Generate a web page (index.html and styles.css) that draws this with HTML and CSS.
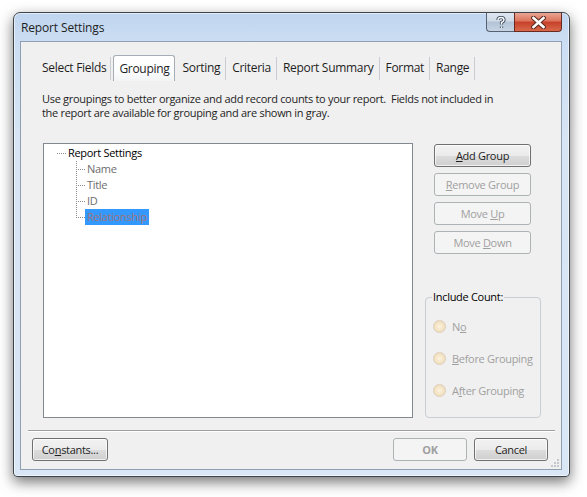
FILE: index.html
```html
<!DOCTYPE html>
<html>
<head>
<meta charset="utf-8">
<title>Report Settings</title>
<link rel="stylesheet" href="styles.css">
</head>
<body>
<div class="window">
  <div class="titlebar">
    <span class="title">Report Settings</span>
    <div class="caption-buttons">
      <div class="cap help"><svg width="10" height="13" viewBox="0 0 10 13"><path d="M2 4 Q2 1.5 5 1.5 Q8 1.5 8 4 Q8 5.5 5.5 6.5 L5.5 8.5 M5.5 10.5 L5.5 12" fill="none" stroke="#3b4a5c" stroke-width="3.2"/><path d="M2 4 Q2 1.5 5 1.5 Q8 1.5 8 4 Q8 5.5 5.5 6.5 L5.5 8.5 M5.5 10.5 L5.5 12" fill="none" stroke="#ffffff" stroke-width="1.4"/></svg></div>
      <div class="cap close"><svg width="15" height="13" viewBox="0 0 15 13"><path d="M2.5 2 L12.5 11 M12.5 2 L2.5 11" stroke="#5a2a22" stroke-width="4.6" stroke-linecap="square"/><path d="M2.5 2 L12.5 11 M12.5 2 L2.5 11" stroke="#ffffff" stroke-width="2.6" stroke-linecap="square"/></svg></div>
    </div>
  </div>
  <div class="client">
    <div class="tabs">
      <div class="tab first-tab">Select Fields</div>
      <div class="tab active">Grouping</div>
      <div class="tab">Sorting</div>
      <div class="tab">Criteria</div>
      <div class="tab">Report Summary</div>
      <div class="tab">Format</div>
      <div class="tab">Range</div>
    </div>
    <div class="desc">
      <div class="line">Use groupings to better organize and add record counts to your report.&nbsp; Fields not included in</div>
      <div class="line">the report are available for grouping and are shown in gray.</div>
    </div>
    <div class="main">
      <div class="tree">
        <div class="row root"><span class="conn conn-root"></span><span class="label">Report Settings</span></div>
        <div class="row child"><span class="conn conn-mid"></span><span class="label gray">Name</span></div>
        <div class="row child"><span class="conn conn-mid"></span><span class="label gray">Title</span></div>
        <div class="row child"><span class="conn conn-mid"></span><span class="label gray">ID</span></div>
        <div class="row child"><span class="conn conn-last"></span><span class="label selected">Relationship</span></div>
      </div>
      <div class="side">
        <div class="btn-stack">
          <button class="btn"><u>A</u>dd Group</button>
          <button class="btn disabled"><u>R</u>emove Group</button>
          <button class="btn disabled">Move <u>U</u>p</button>
          <button class="btn disabled">Move <u>D</u>own</button>
        </div>
        <fieldset class="group">
          <legend>Include Count:</legend>
          <div class="radio"><span class="dot"></span>N<u>o</u></div>
          <div class="radio"><span class="dot"></span><u>B</u>efore Grouping</div>
          <div class="radio"><span class="dot"></span>A<u>f</u>ter Grouping</div>
        </fieldset>
      </div>
    </div>
    <div class="separator"></div>
    <div class="footer">
      <button class="btn wide first">Co<u>n</u>stants...</button>
      <div class="spacer"></div>
      <button class="btn wide disabled bold">OK</button>
      <button class="btn wide">Cancel</button>
    </div>
    <svg class="grip" width="10" height="10" viewBox="0 0 10 10">
      <g fill="#c4c8cc"><rect x="7" y="1" width="2" height="2"/><rect x="4" y="4" width="2" height="2"/><rect x="7" y="4" width="2" height="2"/><rect x="1" y="7" width="2" height="2"/><rect x="4" y="7" width="2" height="2"/><rect x="7" y="7" width="2" height="2"/></g>
    </svg>
  </div>
</div>
</body>
</html>
```

FILE: styles.css
```css
* { box-sizing: border-box; }
html, body { margin: 0; padding: 0; background: #ffffff; }
body {
  width: 587px;
  height: 497px;
  overflow: hidden;
  font-family: "Open Sans", "Noto Sans", sans-serif;
  font-size: 11px;
  letter-spacing: -0.3px;
  color: #1a1a1a;
}
.window {
  margin: 12px 0 0 13px;
  width: 557px;
  height: 465px;
  border: 1px solid #3f4448;
  border-radius: 7px 7px 4px 4px;
  background: linear-gradient(#c0d5ef 0px, #cbdef3 30px, #d6e4f4 120px, #d9e6f5 100%);
  box-shadow: 0 5px 14px rgba(0,0,0,0.55), inset 0 0 0 1px rgba(255,255,255,0.55);
  display: flex;
  flex-direction: column;
}
.titlebar {
  height: 28px;
  display: flex;
  align-items: flex-start;
  padding: 0 7px 0 7px;
}
.title {
  font-size: 12px;
  color: #1e1e1e;
  margin-top: 6px;
  letter-spacing: -0.15px;
}
.caption-buttons {
  margin-left: auto;
  display: flex;
  height: 19px;
}
.cap {
  height: 19px;
  display: flex;
  align-items: center;
  justify-content: center;
  border: 1px solid #566273;
  border-top: none;
}
.help {
  width: 28px;
  border-radius: 0 0 0 4px;
  border-right: none;
  background: linear-gradient(#dfe7f0 0%, #cfdae7 45%, #b3c3d6 50%, #c6d4e4 100%);
}
.close {
  width: 48px;
  border-radius: 0 0 4px 0;
  border-color: #6b2a20;
  background: linear-gradient(#eaa594 0%, #dc735a 45%, #c6402a 50%, #d8694a 100%);
}
.client {
  position: relative;
  margin: 0 7px 0 6px;
  width: 542px;
  height: 429px;
  border: 1px solid #8e9eb3;
  background: #f0f0f0;
  display: flex;
  flex-direction: column;
}
.tabs {
  display: flex;
  margin-top: 13px;
  padding-left: 16px;
  height: 26px;
  align-items: stretch;
}
.tab {
  padding: 0 6px;
  line-height: 25px;
  font-size: 12px;
  color: #1e1e1e;
  position: relative;
  white-space: nowrap;
}
.tab.first-tab { padding: 0 5px; }
.tab::after {
  content: "";
  position: absolute;
  right: 0;
  top: 2px;
  bottom: 1px;
  border-right: 1px solid #c9cdd2;
}
.tab.active {
  margin-left: 2px;
  margin-right: 1px;
  padding: 0 5px;
  border: 1px solid #a6adb6;
  border-bottom: none;
  border-radius: 3px 3px 0 0;
  background: linear-gradient(#ffffff 0%, #fbfcfd 60%, #f3f4f6 100%);
}
.tab.active::after { display: none; }
.desc {
  margin: 10px 0 0 21px;
  color: #1e1e1e;
}
.line {
  height: 14px;
  line-height: 15px;
  white-space: nowrap;
}
.main {
  display: flex;
  margin-top: 24px;
  margin-left: 22px;
  height: 275px;
}
.tree {
  width: 370px;
  height: 275px;
  background: #ffffff;
  border: 1px solid #828790;
  padding-top: 1px;
  padding-left: 13px;
}
.row {
  display: flex;
  height: 16px;
  line-height: 16px;
}
.conn {
  width: 9px;
  height: 16px;
  flex: none;
}
.conn-root {
  background: repeating-linear-gradient(to right, #8c8c8c 0 1px, transparent 1px 2px) no-repeat 0 8px / 100% 1px;
}
.child .conn { margin-left: 19px; }
.conn-mid {
  background:
    repeating-linear-gradient(to bottom, #8c8c8c 0 1px, transparent 1px 2px) no-repeat 0 0 / 1px 100%,
    repeating-linear-gradient(to right, #8c8c8c 0 1px, transparent 1px 2px) no-repeat 0 8px / 100% 1px;
}
.conn-last {
  background:
    repeating-linear-gradient(to bottom, #8c8c8c 0 1px, transparent 1px 2px) no-repeat 0 0 / 1px 9px,
    repeating-linear-gradient(to right, #8c8c8c 0 1px, transparent 1px 2px) no-repeat 0 8px / 100% 1px;
}
.label {
  padding: 0 2px;
  white-space: nowrap;
  color: #000;
}
.label.gray { color: #6d6d6d; }
.label.selected { background: #3399ff; color: #a27479; }
.side {
  margin-left: 12px;
  width: 116px;
  display: flex;
  flex-direction: column;
}
.btn-stack {
  display: flex;
  flex-direction: column;
  gap: 6px;
  padding: 1px 0 0 9px;
}
.btn {
  font-family: inherit;
  font-size: 11px;
  letter-spacing: -0.3px;
  width: 97px;
  height: 23px;
  padding: 0;
  border: 1px solid #707070;
  border-radius: 3px;
  background: linear-gradient(#f2f2f2 0%, #ebebeb 50%, #dddddd 51%, #cfcfcf 100%);
  box-shadow: inset 0 0 0 1px rgba(255,255,255,0.7);
  color: #1e1e1e;
}
.btn.disabled {
  border-color: #adb2b5;
  background: #f4f4f4;
  box-shadow: none;
  color: #a0a0a0;
}
.btn.bold { font-weight: bold; }
.btn.wide { width: 74px; }
.btn.first { width: 76px; }
.group {
  margin: auto 0 0 0;
  height: 127px;
  border: 1px solid #c9ced3;
  border-radius: 4px;
  padding: 16px 0 0 7px;
}
.group legend {
  padding: 0 1px;
  margin-left: -1px;
  color: #000;
  font-size: 11px;
  line-height: 12px;
}
.radio {
  display: flex;
  align-items: center;
  height: 14px;
  margin-bottom: 18px;
  color: #a0a0a0;
  white-space: nowrap;
}
.dot {
  width: 13px;
  height: 13px;
  border-radius: 50%;
  border: 1px solid #dccfb8;
  background: radial-gradient(circle at 50% 50%, #fbf2df 0%, #f1dfbd 70%, #e9d3ad 100%);
  margin-right: 6px;
  flex: none;
}
.separator {
  margin: 12px 0 0 7px;
  width: 527px;
  border-top: 1px solid #a0a0a0;
  border-bottom: 1px solid #ffffff;
}
.footer {
  display: flex;
  margin: 6px 13px 0 11px;
  gap: 7px;
}
.spacer { flex: 1; }
.grip {
  position: absolute;
  right: 1px;
  bottom: 1px;
}
```
